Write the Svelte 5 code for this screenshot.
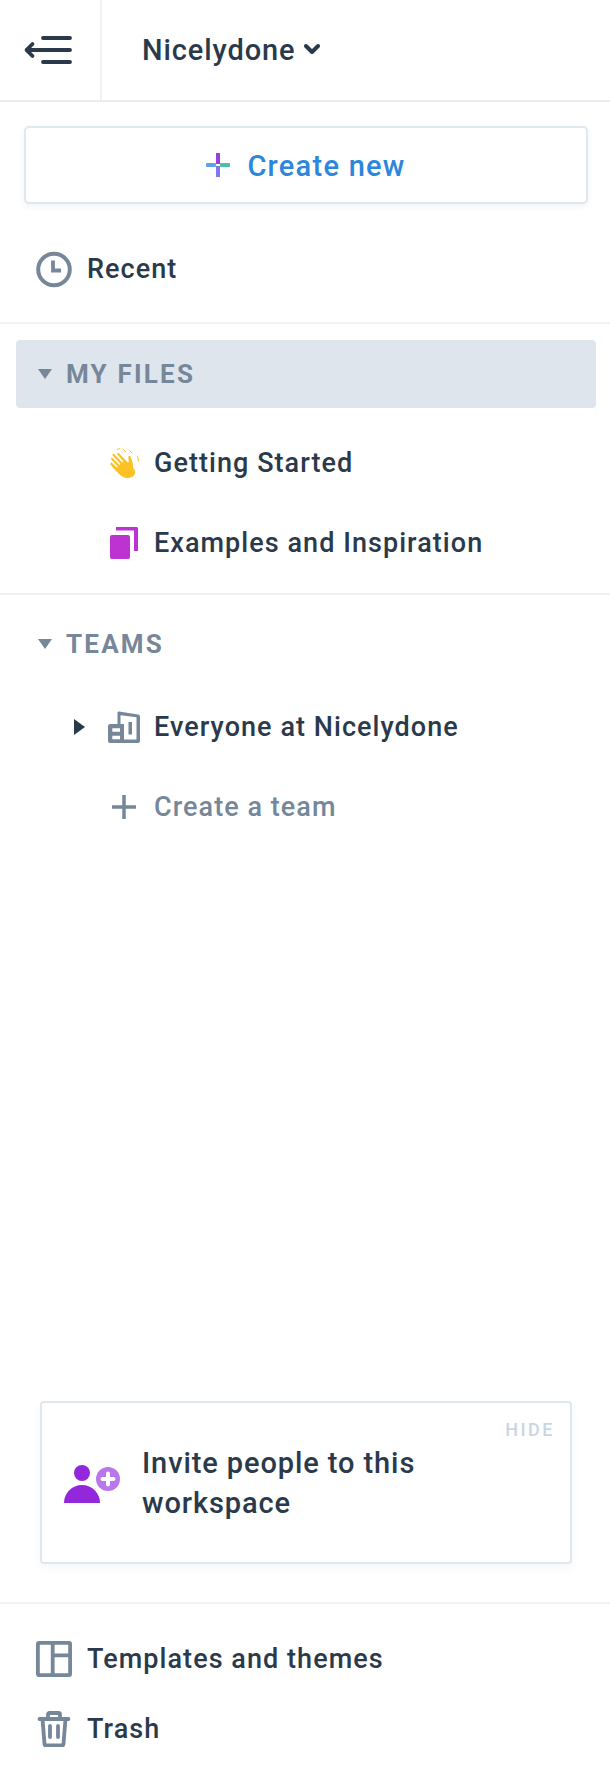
<script>
  const files = [
    { name: "Getting Started", icon: "hand" },
    { name: "Examples and Inspiration", icon: "stack" }
  ];
</script>

<div class="sidebar">
  <header class="top">
    <div class="menu">
      <svg width="50" height="30" viewBox="0 0 50 30" fill="none" stroke="#2a3a4a" stroke-width="3.800" stroke-linecap="round" stroke-linejoin="round">
        <path d="M20 3h27M4 15h43M20 27h27" />
        <path d="M9.500 9l-6 6 6 6" />
      </svg>
    </div>
    <div class="workspace">
      <span>Nicelydone</span>
      <svg class="chevron" width="16" height="12" viewBox="0 0 16 12" fill="none" stroke="#2a3a4a" stroke-width="4" stroke-linecap="round" stroke-linejoin="round"><path d="M2 3l6 6 6-6" /></svg>
    </div>
  </header>

  <div class="create-wrap">
    <button class="create">
      <svg width="24" height="24" viewBox="0 0 24 24">
        <rect x="10" y="0" width="4" height="11" fill="#9b3fdc" />
        <rect x="10" y="13" width="4" height="11" fill="#7f78ee" />
        <rect x="0" y="10" width="10" height="4" rx="1" fill="#5ba4e6" />
        <rect x="14" y="10" width="10" height="4" rx="1" fill="#4cc0ad" />
      </svg>
      <span class="create-label">Create new</span>
    </button>
  </div>

  <div class="nav-row recent">
    <svg width="36" height="37" viewBox="0 0 36 37" fill="none" stroke="#76879a" stroke-width="4">
      <circle cx="18" cy="18.500" r="15.800" />
      <path d="M17 9.500v10h8" stroke-width="3.800" />
    </svg>
    <span>Recent</span>
  </div>

  <div class="section first">
    <div class="section-head active">
      <i class="caret"></i>
      <span>MY FILES</span>
    </div>
    {#each files as file}
      <div class="file">
        <div class="file-icon">
          {#if file.icon === "hand"}
            <svg width="30" height="30" viewBox="0 0 30 30">
              <path d="M3 18.500C1 16 .8 15.500 1.500 15l1.200-.5 5 5 1-1-6.500-7c-.6-1 0-1.800 1-1.800l7.300 7.300 1-1-7.800-8.500c-.7-1 .4-2.200 1.500-1.500l8.100 8.400 1-.9-6-7c-.6-1 .5-2 1.500-1.400l9 9.400 1-.3-.5-5c0-1.500 1.500-2 2.200-.8 1.600 3.600 2.600 7 2.600 11C29 26 24 30 18 30c-5 0-10.500-6.500-15-11.500z" fill="#fcc124" />
              <path d="M8 1.500L11 .5M14 1l3 3M20 2l3 3M28.500 8l1 5" fill="none" stroke="#fcc124" stroke-width="1" stroke-linecap="round" />
            </svg>
          {:else}
            <svg width="28" height="32" viewBox="1 0 28 32" fill="#bd33d1">
              <rect x="1" y="8" width="20" height="24" rx="2" />
              <path d="M7 0h20.500c.8 0 1.500.7 1.500 1.500V24h-4V3.500H7z" />
            </svg>
          {/if}
        </div>
        <span>{file.name}</span>
      </div>
    {/each}
  </div>

  <div class="section">
    <div class="section-head teams">
      <i class="caret"></i>
      <span>TEAMS</span>
    </div>
    <div class="file">
      <i class="caret-right"></i>
      <div class="file-icon">
        <svg width="32" height="32" viewBox="0 0 32 32" fill="#76879a">
          <path fill-rule="evenodd" d="M9.500 2c0-1 .5-1.500 1.500-1.500L30 3.500c1.300.2 2 1 2 2V30c0 1-.7 2-2 2H2c-1 0-2-1-2-2V15c0-1 1-2 2-2h7.500zM12.500 4.300V13H16v15.500h12.500V6.300zM4.300 17.300v3.400H12v-3.400zM4.300 24.700v3.600H12v-3.600z" />
          <rect x="20.500" y="11" width="3.500" height="12.500" />
        </svg>
      </div>
      <span>Everyone at Nicelydone</span>
    </div>
    <div class="file muted">
      <div class="file-icon">
        <svg width="24" height="24" viewBox="0 0 24 24" fill="none" stroke="#76879a" stroke-width="3.500"><path d="M12 0v24M0 12h24" /></svg>
      </div>
      <span>Create a team</span>
    </div>
  </div>

  <div class="grow"></div>

  <div class="invite">
    <span class="hide">HIDE</span>
    <svg width="58" height="40" viewBox="0 0 58 40">
      <circle cx="18" cy="10" r="8" fill="#9227dc" />
      <path d="M0 40c0-10 8-18 18-18s18 8 18 18z" fill="#9227dc" />
      <circle cx="44" cy="16" r="12" fill="#b977ea" />
      <path d="M44 10.500v11M38.500 16h11" stroke="#fff" stroke-width="4" stroke-linecap="round" />
    </svg>
    <p>Invite people to this workspace</p>
  </div>

  <footer class="bottom">
    <div class="nav-row">
      <svg width="36" height="36" viewBox="0 0 36 36" fill="none" stroke="#76879a" stroke-width="3.800" stroke-linejoin="round">
        <rect x="1.900" y="1.900" width="32.200" height="32.200" rx="1" />
        <path d="M16.700 2v32M16.700 14.300H34" />
      </svg>
      <span>Templates and themes</span>
    </div>
    <div class="nav-row">
      <svg width="36" height="36" viewBox="0 0 36 36" fill="none" stroke="#76879a" stroke-width="3.800" stroke-linecap="round" stroke-linejoin="round">
        <path d="M3.500 8h29M12 7.500V3.500c0-1 .6-1.500 1.500-1.500h9c.9 0 1.500.5 1.500 1.500v4" />
        <path d="M6.500 8l2 25c.1 1 .7 1.500 1.500 1.500h16c.8 0 1.400-.5 1.500-1.500l2-25" />
        <path d="M14 15v11M22 15v11" />
      </svg>
      <span>Trash</span>
    </div>
  </footer>
</div>

<style>
  :global(body) {
    margin: 0;
    background: #fff;
  }

  .sidebar {
    width: 610px;
    height: 1782px;
    display: flex;
    flex-direction: column;
    box-sizing: border-box;
    font-family: Roboto, "Noto Sans", sans-serif;
    font-weight: 500;
    font-size: 27px;
    letter-spacing: 1.050px;
    color: #2a3a4a;
  }

  .top {
    height: 102px;
    flex: none;
    box-sizing: border-box;
    display: flex;
    border-bottom: 2px solid #e9edf2;
  }

  .menu {
    width: 102px;
    box-sizing: border-box;
    border-right: 2px solid #edf2f7;
    display: flex;
    align-items: center;
    padding-left: 23px;
  }

  .workspace {
    display: flex;
    align-items: center;
    gap: 8px;
    padding-left: 40px;
    font-size: 29px;
    letter-spacing: 0.900px;
  }

  .chevron {
    margin-top: -3px;
  }

  .create-wrap {
    padding: 24px 22px 0 24px;
  }

  .create {
    width: 100%;
    height: 78px;
    box-sizing: border-box;
    display: flex;
    align-items: center;
    justify-content: center;
    gap: 17px;
    padding: 0;
    background: #fff;
    border: 2px solid #dfe7ef;
    border-radius: 5px;
    box-shadow: 0 3px 6px rgba(45, 70, 100, 0.06);
    font: inherit;
    font-size: 29px;
    letter-spacing: 1.250px;
    color: #2b86dc;
  }

  .create-label {
    margin-top: 2px;
  }

  .nav-row {
    display: flex;
    align-items: center;
    gap: 15px;
    padding-left: 36px;
    height: 70px;
    flex: none;
  }

  .recent {
    margin-top: 30px;
  }

  .section {
    border-top: 2px solid #edf2f7;
    padding-top: 15px;
    padding-bottom: 10px;
  }

  .first {
    margin-top: 18px;
    padding-top: 16px;
  }

  .section-head {
    height: 68px;
    display: flex;
    align-items: center;
    gap: 14px;
    padding-left: 22px;
    margin: 0 14px 15px 16px;
    border-radius: 4px;
    font-size: 26px;
    font-weight: 700;
    letter-spacing: 2.200px;
    color: #76879a;
  }

  .section-head.active {
    background: #dee5ec;
  }

  .section-head.teams {
    margin-bottom: 9px;
  }

  .caret {
    width: 0;
    height: 0;
    border-left: 7.500px solid transparent;
    border-right: 7.500px solid transparent;
    border-top: 10px solid #76879a;
  }

  .caret-right {
    position: absolute;
    left: 74px;
    width: 0;
    height: 0;
    border-top: 8px solid transparent;
    border-bottom: 8px solid transparent;
    border-left: 11px solid #2a3a4a;
  }

  .file {
    height: 80px;
    display: flex;
    align-items: center;
    gap: 14px;
    padding-left: 108px;
    position: relative;
  }

  .file-icon {
    width: 32px;
    flex: none;
    display: flex;
    justify-content: center;
  }

  .file.muted {
    color: #76879a;
  }

  .grow {
    flex: 1;
  }

  .invite {
    position: relative;
    height: 163px;
    margin: 0 38px 38px 40px;
    box-sizing: border-box;
    display: flex;
    align-items: center;
    gap: 20px;
    padding: 0 0 0 22px;
    border: 2px solid #dfe7ef;
    border-radius: 4px;
    box-shadow: 0 4px 8px rgba(45, 70, 100, 0.05);
    font-size: 29px;
    letter-spacing: 0.900px;
  }

  .invite p {
    margin: 0;
    width: 340px;
    line-height: 40px;
  }

  .hide {
    position: absolute;
    top: 16px;
    right: 15px;
    font-size: 18px;
    letter-spacing: 2.500px;
    color: #cbd5e0;
  }

  .bottom {
    border-top: 2px solid #edf2f7;
    height: 180px;
    box-sizing: border-box;
    padding-top: 20px;
    flex: none;
  }
</style>
